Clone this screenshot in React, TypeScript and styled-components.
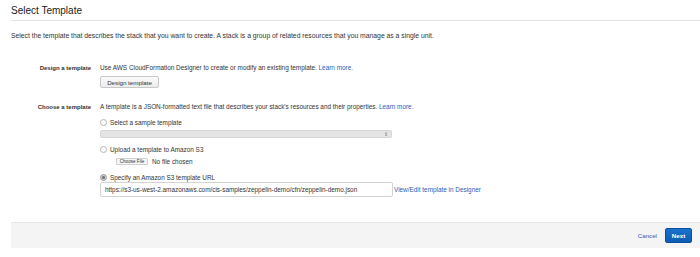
import styled, { createGlobalStyle } from 'styled-components'

const GlobalStyle = createGlobalStyle`
  body {
    margin: 0;
    background: #ffffff;
    font-family: 'Liberation Sans', Arial, sans-serif;
    color: #333333;
  }
`

const StyledPage = styled.div`
  padding-left: 11px;
  width: 689px;
`

const StyledTitle = styled.h1`
  margin: 0;
  padding-top: 5px;
  height: 15px;
  font-size: 10px;
  line-height: 12px;
  font-weight: 400;
  color: #222;
  border-bottom: 1px solid #e2e2e2;
`

const StyledIntro = styled.p`
  margin: 11px 0 0;
  font-size: 6.8px;
  line-height: 8px;
`

const StyledSection = styled.div<{ $top: number }>`
  display: grid;
  grid-template-columns: 80px 1fr;
  column-gap: 9px;
  margin-top: ${(p) => p.$top}px;
`

const StyledLabel = styled.div`
  text-align: right;
  font-size: 6px;
  line-height: 8px;
  font-weight: 700;
  color: #333;
`

const StyledContent = styled.div`
  display: flex;
  flex-direction: column;
  align-items: flex-start;
`

const StyledText = styled.div`
  font-size: 6.4px;
  line-height: 8px;
`

const StyledLink = styled.a`
  color: #1e5fb8;
  text-decoration: none;
  font-size: 6.4px;
`

const StyledButton = styled.button`
  margin-top: 4px;
  height: 12px;
  width: 59px;
  padding: 0;
  border: 1px solid #c8c8c8;
  border-radius: 2px;
  background: linear-gradient(#fbfbfb, #ececec);
  font-family: inherit;
  font-size: 6.2px;
  color: #333;
`

const StyledRadioRow = styled.label<{ $top: number }>`
  display: flex;
  align-items: center;
  gap: 3px;
  margin-top: ${(p) => p.$top}px;
  height: 8px;
  font-size: 6.4px;
`

const StyledRadio = styled.span<{ $checked?: boolean }>`
  box-sizing: border-box;
  width: 7px;
  height: 7px;
  border-radius: 50%;
  border: 1px solid ${(p) => (p.$checked ? '#9a9a9a' : '#b5b5b5')};
  background: ${(p) => (p.$checked ? 'radial-gradient(circle, #777 0 1.3px, #cfcfcf 1.6px)' : '#fff')};
`

const StyledSelect = styled.div`
  box-sizing: border-box;
  margin-top: 4px;
  width: 292px;
  height: 8px;
  border: 1px solid #d6d6d6;
  border-radius: 2px;
  background: #e4e4e4;
  display: flex;
  justify-content: flex-end;
  align-items: center;
  padding-right: 3px;
  font-size: 5px;
  color: #777;
`

const StyledFileRow = styled.div`
  display: flex;
  align-items: center;
  gap: 4px;
  margin: 5px 0 0 16px;
  font-size: 6.4px;
`

const StyledFileButton = styled.span`
  box-sizing: border-box;
  height: 7px;
  width: 32px;
  border: 1px solid #d0d0d0;
  border-radius: 1px;
  background: #f6f6f6;
  font-size: 4.6px;
  line-height: 5px;
  text-align: center;
`

const StyledUrlRow = styled.div`
  display: flex;
  align-items: center;
  gap: 1px;
  margin-top: 1px;
`

const StyledInput = styled.div`
  box-sizing: border-box;
  width: 293px;
  height: 15px;
  border: 1px solid #d3d3d3;
  border-radius: 2px;
  padding: 0 4px;
  font-size: 6.4px;
  line-height: 13px;
  white-space: nowrap;
  overflow: hidden;
`

const StyledFooter = styled.div`
  margin-top: 25px;
  height: 26px;
  box-sizing: border-box;
  border-top: 1px solid #e6e6e6;
  background: #f4f4f4;
  display: flex;
  justify-content: flex-end;
  align-items: center;
  gap: 8px;
  padding-right: 8px;
`

const StyledCancel = styled.a`
  font-size: 6.2px;
  color: #1e5fb8;
`

const StyledPrimary = styled.button`
  width: 27px;
  height: 15px;
  padding: 0;
  border: 1px solid #0a4f9e;
  border-radius: 2px;
  background: linear-gradient(#1a72cc, #0d5cb3);
  color: #fff;
  font-family: inherit;
  font-size: 6.2px;
  font-weight: 700;
`

export default function App() {
  return (
    <StyledPage>
      <GlobalStyle />
      <StyledTitle>Select Template</StyledTitle>
      <StyledIntro>
        Select the template that describes the stack that you want to create. A stack is a group of related resources
        that you manage as a single unit.
      </StyledIntro>

      <StyledSection $top={24}>
        <StyledLabel>Design a template</StyledLabel>
        <StyledContent>
          <StyledText>
            Use AWS CloudFormation Designer to create or modify an existing template. <StyledLink>Learn more.</StyledLink>
          </StyledText>
          <StyledButton>Design template</StyledButton>
        </StyledContent>
      </StyledSection>

      <StyledSection $top={15}>
        <StyledLabel>Choose a template</StyledLabel>
        <StyledContent>
          <StyledText>
            A template is a JSON-formatted text file that describes your stack's resources and their properties.{' '}
            <StyledLink>Learn more.</StyledLink>
          </StyledText>
          <StyledRadioRow $top={7}>
            <StyledRadio />
            Select a sample template
          </StyledRadioRow>
          <StyledSelect>⇕</StyledSelect>
          <StyledRadioRow $top={7}>
            <StyledRadio />
            Upload a template to Amazon S3
          </StyledRadioRow>
          <StyledFileRow>
            <StyledFileButton>Choose File</StyledFileButton>
            No file chosen
          </StyledFileRow>
          <StyledRadioRow $top={8}>
            <StyledRadio $checked />
            Specify an Amazon S3 template URL
          </StyledRadioRow>
          <StyledUrlRow>
            <StyledInput>https://s3-us-west-2.amazonaws.com/cis-samples/zeppelin-demo/cfn/zeppelin-demo.json</StyledInput>
            <StyledLink>View/Edit template in Designer</StyledLink>
          </StyledUrlRow>
        </StyledContent>
      </StyledSection>

      <StyledFooter>
        <StyledCancel>Cancel</StyledCancel>
        <StyledPrimary>Next</StyledPrimary>
      </StyledFooter>
    </StyledPage>
  )
}
